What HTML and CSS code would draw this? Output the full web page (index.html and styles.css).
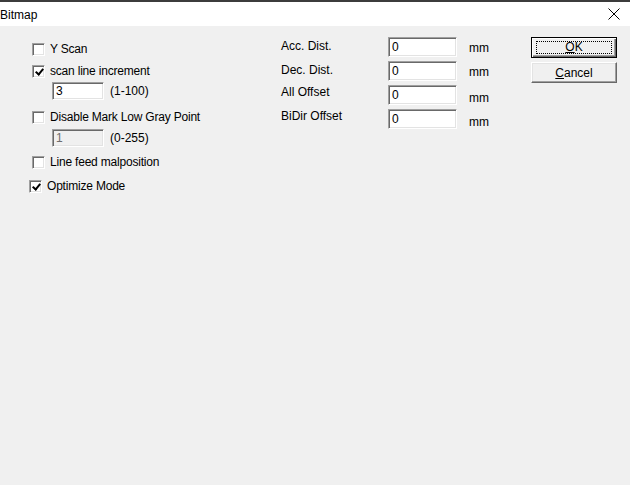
FILE: index.html
```html
<!DOCTYPE html>
<html lang="en">
<head>
    <meta charset="UTF-8"/>
    <title>Bitmap</title>
    <link rel="stylesheet" href="styles.css">
</head>
<body>
<div class="window">
    <div class="titlebar">
        <span class="title">Bitmap</span>
        <svg class="close" width="12" height="12" viewBox="0 0 12 12">
            <path d="M0.5 0.5 L11.5 11.5 M11.5 0.5 L0.5 11.5" stroke="#000" stroke-width="1" fill="none"/>
        </svg>
    </div>

    <div class="client">
        <div class="options">
            <label class="check">
                <span class="box"></span>
                <span>Y Scan</span>
            </label>
            <label class="check gap-9">
                <span class="box checked"></span>
                <span>scan line increment</span>
            </label>
            <div class="sub gap-4">
                <span class="edit small">3</span>
                <span>(1-100)</span>
            </div>
            <label class="check gap-11">
                <span class="box"></span>
                <span>Disable Mark Low Gray Point</span>
            </label>
            <div class="sub gap-5">
                <span class="edit small disabled">1</span>
                <span>(0-255)</span>
            </div>
            <label class="check gap-9">
                <span class="box"></span>
                <span>Line feed malposition</span>
            </label>
            <label class="check gap-11 outdent">
                <span class="box checked"></span>
                <span>Optimize Mode</span>
            </label>
        </div>

        <div class="fields">
            <span class="label">Acc. Dist.</span>
            <span class="edit">0</span>
            <span class="unit">mm</span>

            <span class="label">Dec. Dist.</span>
            <span class="edit">0</span>
            <span class="unit">mm</span>

            <span class="label up">All Offset</span>
            <span class="edit">0</span>
            <span class="unit down">mm</span>

            <span class="label up">BiDir Offset</span>
            <span class="edit">0</span>
            <span class="unit down">mm</span>
        </div>

        <div class="buttons">
            <button class="btn default"><span class="focus"><u>O</u>K</span></button>
            <button class="btn"><span><u>C</u>ancel</span></button>
        </div>
    </div>
</div>
</body>
</html>
```

FILE: styles.css
```css
body {
    margin: 0;
    padding: 0;
    font-family: "Liberation Sans", Arial, sans-serif;
    font-size: 12px;
    color: #000;
    background-color: #f0f0f0;
}

.window {
    width: 630px;
    height: 485px;
    background-color: #f0f0f0;
    overflow: hidden;
}

.titlebar {
    height: 24px;
    background-color: #fff;
    border-top: 2px solid #3c3c3c;
    display: flex;
    align-items: center;
    justify-content: space-between;
    padding-right: 10px;
}

.title {
    font-size: 12px;
    line-height: 14px;
    padding-top: 1px;
}

.close {
    display: block;
}

.client {
    display: flex;
    align-items: flex-start;
}

/* left column */
.options {
    width: 249px;
    padding: 17px 0 0 32px;
    display: flex;
    flex-direction: column;
}

.check {
    display: flex;
    align-items: center;
    gap: 5px;
    height: 13px;
    line-height: 13px;
    letter-spacing: -0.2px;
}

.check.outdent {
    margin-left: -3px;
}

.box {
    box-sizing: border-box;
    width: 13px;
    height: 13px;
    background-color: #fff;
    border: 1px solid;
    border-color: #a0a0a0 #fff #fff #a0a0a0;
    box-shadow: inset 1px 1px #696969, inset -1px -1px #e3e3e3;
    position: relative;
}

.box.checked::after {
    content: "";
    position: absolute;
    left: 4px;
    top: 1px;
    width: 3px;
    height: 6px;
    border: solid #000;
    border-width: 0 2px 2px 0;
    transform: rotate(40deg);
}

.sub {
    display: flex;
    align-items: center;
    gap: 6px;
    padding-left: 20px;
    height: 18px;
}

.gap-4 { margin-top: 4px; }
.gap-5 { margin-top: 5px; }
.gap-9 { margin-top: 9px; }
.gap-11 { margin-top: 11px; }

.edit {
    box-sizing: border-box;
    display: block;
    height: 20px;
    line-height: 16px;
    padding: 1px 3px 0;
    background-color: #fff;
    border: 1px solid;
    border-color: #a0a0a0 #fff #fff #a0a0a0;
    box-shadow: inset 1px 1px #696969, inset -1px -1px #e3e3e3;
}

.edit.small {
    width: 52px;
    height: 18px;
    line-height: 14px;
}

.edit.disabled {
    background-color: #f0f0f0;
    color: #6d6d6d;
}

/* middle column */
.fields {
    width: 250px;
    padding-top: 11px;
    display: grid;
    grid-template-columns: 107px 69px auto;
    grid-auto-rows: 20px;
    row-gap: 4px;
    align-items: center;
}

.label {
    padding-bottom: 2px;
}

.label.up {
    padding-bottom: 6px;
}

.unit {
    padding-left: 12px;
    padding-top: 2px;
}

.unit.down {
    padding-top: 5px;
}

/* buttons */
.buttons {
    padding-top: 11px;
    display: flex;
    flex-direction: column;
    gap: 4px;
}

.btn {
    box-sizing: border-box;
    width: 86px;
    height: 21px;
    padding: 0;
    font-family: inherit;
    font-size: 12px;
    background-color: #f0f0f0;
    border: 1px solid;
    border-color: #fff #696969 #696969 #fff;
    box-shadow: inset -1px -1px #a0a0a0, inset 1px 1px #e3e3e3;
    display: flex;
    align-items: center;
    justify-content: center;
}

.btn.default {
    border: 1px solid #000;
    box-shadow: inset 1px 1px #fff, inset -1px -1px #696969, inset -2px -2px #a0a0a0;
}

.btn .focus {
    box-sizing: border-box;
    width: 76px;
    height: 13px;
    line-height: 11px;
    border: 1px dotted #000;
    text-align: center;
}
```
